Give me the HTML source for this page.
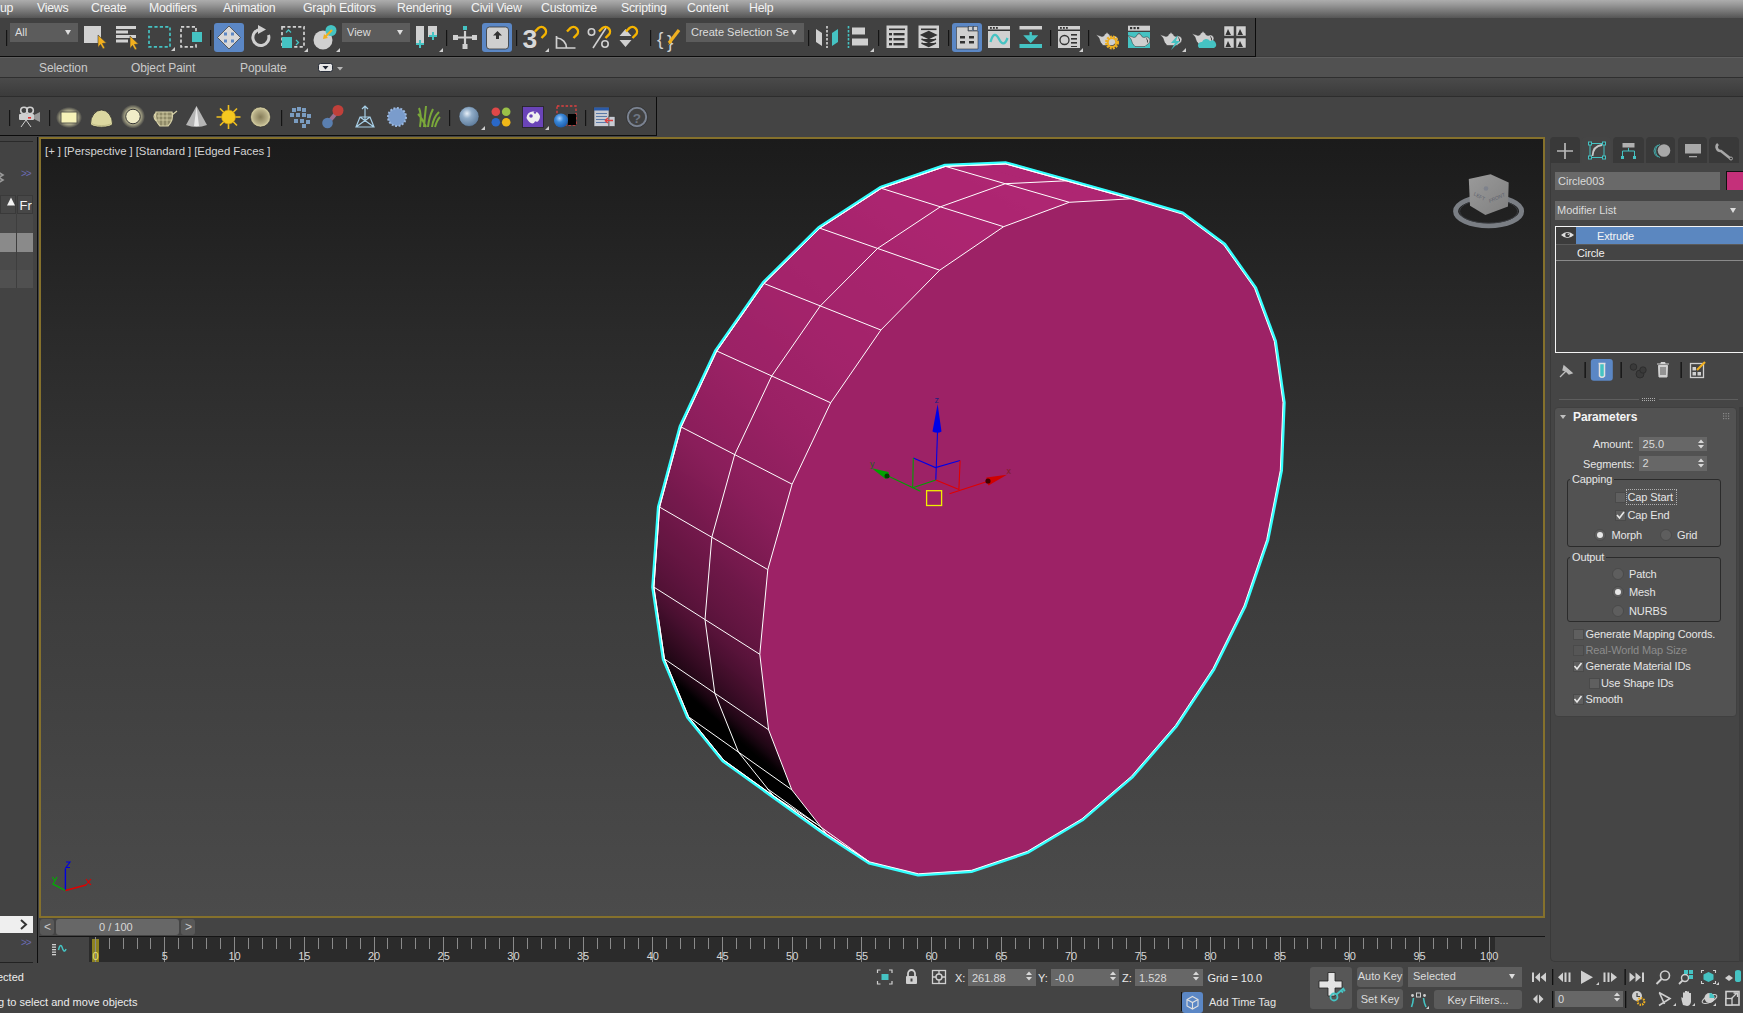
<!DOCTYPE html>
<html><head><meta charset="utf-8">
<style>
*{margin:0;padding:0;box-sizing:border-box}
html,body{width:1743px;height:1013px;overflow:hidden;background:#444;font-family:"Liberation Sans",sans-serif;color:#ddd}
.a{position:absolute}
.t{position:absolute;white-space:nowrap;line-height:1}
#menu{left:0;top:0;width:1743px;height:18px;background:linear-gradient(#adadad,#999 25%,#555)}
#menu span{position:absolute;top:2px;font-size:12.3px;letter-spacing:-0.25px;color:#f4f4f4;white-space:nowrap;line-height:1}
#tb1{left:0;top:18px;width:1256px;height:39px;background:#414141;border-right:1px solid #0c0c0c;border-bottom:1px solid #0c0c0c}
#tbl{left:1256px;top:56px;width:487px;height:1px;background:#3c3c3c}
#rib{left:0;top:57px;width:1743px;height:21px;background:#515151;border-top:1px solid #5f5f5f;border-bottom:1px solid #2f2f2f}
#rib span{position:absolute;top:4px;font-size:12px;letter-spacing:-0.1px;color:#cacaca;line-height:1}
#band{left:0;top:78px;width:1743px;height:19px;background:linear-gradient(#4a4a4a,#3b3b3b);border-bottom:1px solid #2d2d2d}
#tb2{left:0;top:97px;width:657px;height:39px;background:#414141;border-right:1px solid #0c0c0c;border-bottom:1px solid #0c0c0c}
#vp{left:39px;top:137px;width:1506px;height:781px;border:2px solid #85712c;background:linear-gradient(#1b1b1b,#2a2a2a 25%,#3d3d3d 60%,#4b4b4b);overflow:hidden}
#lp{left:0;top:137px;width:34px;height:826px;background:#434343;border-right:1px solid #2a2a2a;border-bottom:1px solid #222}
.dd{position:absolute;background:#5c5c5c;height:19px;font-size:11px;color:#dcdcdc;padding:4px 0 0 5px;line-height:1;white-space:nowrap;overflow:hidden}
.dd:after{content:"";position:absolute;right:7px;top:7px;border-left:3.5px solid transparent;border-right:3.5px solid transparent;border-top:5px solid #ddd}
.sep{position:absolute;width:1px;background:#151515}
.fld{position:absolute;background:#676767;font-size:11px;color:#dadada;padding:3px 0 0 4px;line-height:1;white-space:nowrap}
.btn{position:absolute;background:#5a5a5a;border-radius:3px;font-size:11px;color:#dcdcdc;text-align:center;line-height:1;white-space:nowrap}
.lbl{position:absolute;font-size:11px;color:#e6e6e6;line-height:1;white-space:nowrap;padding-top:1px;letter-spacing:-0.12px}
.cb{position:absolute;width:11px;height:11px;background:#5f5f5f;border:1px solid #4a4a4a}
.rd{position:absolute;width:12px;height:12px;border-radius:50%;background:#5e5e5e;border:1px solid #4a4a4a}
.grp{position:absolute;border:1px solid #2b2b2b;border-radius:3px}
</style></head><body>
<!--MENU-->
<div id="menu" class="a">
<span style="left:0px">up</span><span style="left:37px">Views</span><span style="left:91px">Create</span><span style="left:149px">Modifiers</span><span style="left:223px">Animation</span><span style="left:303px">Graph Editors</span><span style="left:397px">Rendering</span><span style="left:471px">Civil View</span><span style="left:541px">Customize</span><span style="left:621px">Scripting</span><span style="left:687px">Content</span><span style="left:749px">Help</span>
</div>
<div id="tb1" class="a"></div>
<div id="tbl" class="a"></div>
<div id="rib" class="a"><span style="left:39px">Selection</span><span style="left:131px">Object Paint</span><span style="left:240px">Populate</span></div>
<div id="band" class="a"></div>
<div id="tb2" class="a"></div>
<div id="lp" class="a"></div>
<div id="vp" class="a">
<div class="t" style="left:4px;top:7px;font-size:11.4px;color:#d4d4d4;word-spacing:-0.2px">[+ ] [Perspective ] [Standard ] [Edged Faces ]</div>
</div>
<svg class="a" style="left:0;top:0" width="1743" height="1013" viewBox="0 0 1743 1013">
<polygon points="1005.9,164.0 945.5,166.4 881.4,188.3 819.9,228.2 764.0,283.5 716.8,351.0 681.2,427.0 659.6,507.1 653.9,587.1 664.5,659.0 688.7,716.9 723.7,760.1 826.3,833.8 869.3,861.8 918.4,873.8 971.6,870.3 1027.5,851.3 1082.0,818.8 1131.4,776.3 1175.3,725.6 1213.0,668.4 1243.9,606.0 1266.7,539.6 1280.3,470.3 1283.0,402.6 1274.3,341.4 1254.5,288.2 1223.7,244.9 1182.3,214.1 1130.6,198.8" fill="#000" stroke="#33ffff" stroke-width="5.4" stroke-linejoin="round"/>
<defs><linearGradient id="g0" gradientUnits="userSpaceOnUse" x1="1024.4" y1="164.6" x2="1017.8" y2="181.5"><stop offset="0.00" stop-color="#ae2672"/><stop offset="0.20" stop-color="#ae2672"/><stop offset="0.40" stop-color="#ae2672"/><stop offset="0.60" stop-color="#ae2672"/><stop offset="0.80" stop-color="#ae2672"/><stop offset="1.00" stop-color="#ae2672"/></linearGradient><linearGradient id="g1" gradientUnits="userSpaceOnUse" x1="1086.6" y1="182.0" x2="1080.0" y2="199.2"><stop offset="0.00" stop-color="#ae2672"/><stop offset="0.20" stop-color="#ae2672"/><stop offset="0.40" stop-color="#ae2672"/><stop offset="0.60" stop-color="#ae2672"/><stop offset="0.80" stop-color="#ae2672"/><stop offset="1.00" stop-color="#ae2672"/></linearGradient><linearGradient id="g2" gradientUnits="userSpaceOnUse" x1="994.3" y1="165.5" x2="987.2" y2="183.2"><stop offset="0.00" stop-color="#ae2672"/><stop offset="0.20" stop-color="#ae2672"/><stop offset="0.40" stop-color="#ae2672"/><stop offset="0.60" stop-color="#ae2672"/><stop offset="0.80" stop-color="#ae2672"/><stop offset="1.00" stop-color="#ae2672"/></linearGradient><linearGradient id="g3" gradientUnits="userSpaceOnUse" x1="1056.3" y1="183.2" x2="1049.2" y2="201.2"><stop offset="0.00" stop-color="#ae2672"/><stop offset="0.20" stop-color="#ae2672"/><stop offset="0.40" stop-color="#ae2672"/><stop offset="0.60" stop-color="#ae2672"/><stop offset="0.80" stop-color="#ae2672"/><stop offset="1.00" stop-color="#ae2672"/></linearGradient><linearGradient id="g4" gradientUnits="userSpaceOnUse" x1="968.2" y1="164.2" x2="950.7" y2="197.1"><stop offset="0.00" stop-color="#ae2672"/><stop offset="0.20" stop-color="#ae2672"/><stop offset="0.40" stop-color="#ad2571"/><stop offset="0.60" stop-color="#ad2571"/><stop offset="0.80" stop-color="#ad2571"/><stop offset="1.00" stop-color="#ad2571"/></linearGradient><linearGradient id="g5" gradientUnits="userSpaceOnUse" x1="1029.9" y1="182.1" x2="1012.4" y2="215.7"><stop offset="0.00" stop-color="#ae2672"/><stop offset="0.20" stop-color="#ae2672"/><stop offset="0.40" stop-color="#ae2672"/><stop offset="0.60" stop-color="#ae2672"/><stop offset="0.80" stop-color="#ad2571"/><stop offset="1.00" stop-color="#ad2571"/></linearGradient><linearGradient id="g6" gradientUnits="userSpaceOnUse" x1="936.6" y1="175.0" x2="917.7" y2="208.8"><stop offset="0.00" stop-color="#ad2571"/><stop offset="0.20" stop-color="#ad2571"/><stop offset="0.40" stop-color="#ad2571"/><stop offset="0.60" stop-color="#ac2571"/><stop offset="0.80" stop-color="#ac2571"/><stop offset="1.00" stop-color="#ac2570"/></linearGradient><linearGradient id="g7" gradientUnits="userSpaceOnUse" x1="997.9" y1="193.4" x2="979.0" y2="228.1"><stop offset="0.00" stop-color="#ae2672"/><stop offset="0.20" stop-color="#ad2571"/><stop offset="0.40" stop-color="#ad2571"/><stop offset="0.60" stop-color="#ad2571"/><stop offset="0.80" stop-color="#ac2571"/><stop offset="1.00" stop-color="#ac2571"/></linearGradient><linearGradient id="g8" gradientUnits="userSpaceOnUse" x1="909.7" y1="186.5" x2="881.3" y2="228.8"><stop offset="0.00" stop-color="#ac2571"/><stop offset="0.20" stop-color="#ac2570"/><stop offset="0.40" stop-color="#ab2570"/><stop offset="0.60" stop-color="#ab2570"/><stop offset="0.80" stop-color="#aa256f"/><stop offset="1.00" stop-color="#a9256f"/></linearGradient><linearGradient id="g9" gradientUnits="userSpaceOnUse" x1="970.6" y1="205.5" x2="942.0" y2="249.2"><stop offset="0.00" stop-color="#ad2571"/><stop offset="0.20" stop-color="#ac2571"/><stop offset="0.40" stop-color="#ac2571"/><stop offset="0.60" stop-color="#ac2570"/><stop offset="0.80" stop-color="#ab2570"/><stop offset="1.00" stop-color="#aa2570"/></linearGradient><linearGradient id="g10" gradientUnits="userSpaceOnUse" x1="879.5" y1="206.7" x2="849.3" y2="249.4"><stop offset="0.00" stop-color="#aa2570"/><stop offset="0.20" stop-color="#aa256f"/><stop offset="0.40" stop-color="#a9246e"/><stop offset="0.60" stop-color="#a8246e"/><stop offset="0.80" stop-color="#a7246d"/><stop offset="1.00" stop-color="#a7246d"/></linearGradient><linearGradient id="g11" gradientUnits="userSpaceOnUse" x1="939.8" y1="226.5" x2="909.4" y2="270.7"><stop offset="0.00" stop-color="#ac2570"/><stop offset="0.20" stop-color="#ab2570"/><stop offset="0.40" stop-color="#aa256f"/><stop offset="0.60" stop-color="#a9256f"/><stop offset="0.80" stop-color="#a9246e"/><stop offset="1.00" stop-color="#a8246e"/></linearGradient><linearGradient id="g12" gradientUnits="userSpaceOnUse" x1="853.2" y1="229.2" x2="816.1" y2="275.4"><stop offset="0.00" stop-color="#a8246e"/><stop offset="0.20" stop-color="#a7246d"/><stop offset="0.40" stop-color="#a6246d"/><stop offset="0.60" stop-color="#a6246c"/><stop offset="0.80" stop-color="#a5246c"/><stop offset="1.00" stop-color="#a5246c"/></linearGradient><linearGradient id="g13" gradientUnits="userSpaceOnUse" x1="913.0" y1="249.8" x2="875.4" y2="298.0"><stop offset="0.00" stop-color="#a9256f"/><stop offset="0.20" stop-color="#a8246e"/><stop offset="0.40" stop-color="#a8246e"/><stop offset="0.60" stop-color="#a7246d"/><stop offset="0.80" stop-color="#a6246d"/><stop offset="1.00" stop-color="#a6246c"/></linearGradient><linearGradient id="g14" gradientUnits="userSpaceOnUse" x1="825.8" y1="257.7" x2="787.0" y2="303.4"><stop offset="0.00" stop-color="#a6246c"/><stop offset="0.20" stop-color="#a5246c"/><stop offset="0.40" stop-color="#a5246c"/><stop offset="0.60" stop-color="#a4236b"/><stop offset="0.80" stop-color="#a4236b"/><stop offset="1.00" stop-color="#a3236b"/></linearGradient><linearGradient id="g15" gradientUnits="userSpaceOnUse" x1="884.9" y1="279.3" x2="845.5" y2="327.1"><stop offset="0.00" stop-color="#a7246d"/><stop offset="0.20" stop-color="#a6246d"/><stop offset="0.40" stop-color="#a5246c"/><stop offset="0.60" stop-color="#a5246c"/><stop offset="0.80" stop-color="#a4246c"/><stop offset="1.00" stop-color="#a4236b"/></linearGradient><linearGradient id="g16" gradientUnits="userSpaceOnUse" x1="801.2" y1="288.9" x2="759.2" y2="334.9"><stop offset="0.00" stop-color="#a4236b"/><stop offset="0.20" stop-color="#a3236b"/><stop offset="0.40" stop-color="#a3236a"/><stop offset="0.60" stop-color="#a1236a"/><stop offset="0.80" stop-color="#a02369"/><stop offset="1.00" stop-color="#9f2268"/></linearGradient><linearGradient id="g17" gradientUnits="userSpaceOnUse" x1="859.7" y1="311.7" x2="816.8" y2="359.9"><stop offset="0.00" stop-color="#a5246c"/><stop offset="0.20" stop-color="#a4236b"/><stop offset="0.40" stop-color="#a4236b"/><stop offset="0.60" stop-color="#a3236b"/><stop offset="0.80" stop-color="#a2236a"/><stop offset="1.00" stop-color="#a12369"/></linearGradient><linearGradient id="g18" gradientUnits="userSpaceOnUse" x1="777.8" y1="323.8" x2="734.7" y2="368.7"><stop offset="0.00" stop-color="#a12369"/><stop offset="0.20" stop-color="#a02268"/><stop offset="0.40" stop-color="#9e2268"/><stop offset="0.60" stop-color="#9d2267"/><stop offset="0.80" stop-color="#9c2266"/><stop offset="1.00" stop-color="#9a2165"/></linearGradient><linearGradient id="g19" gradientUnits="userSpaceOnUse" x1="835.6" y1="348.0" x2="791.5" y2="395.1"><stop offset="0.00" stop-color="#a3236b"/><stop offset="0.20" stop-color="#a2236a"/><stop offset="0.40" stop-color="#a02369"/><stop offset="0.60" stop-color="#9f2268"/><stop offset="0.80" stop-color="#9e2267"/><stop offset="1.00" stop-color="#9d2266"/></linearGradient><linearGradient id="g20" gradientUnits="userSpaceOnUse" x1="756.4" y1="361.4" x2="713.9" y2="404.3"><stop offset="0.00" stop-color="#9d2266"/><stop offset="0.20" stop-color="#9b2266"/><stop offset="0.40" stop-color="#9a2164"/><stop offset="0.60" stop-color="#972163"/><stop offset="0.80" stop-color="#952061"/><stop offset="1.00" stop-color="#932060"/></linearGradient><linearGradient id="g21" gradientUnits="userSpaceOnUse" x1="813.6" y1="386.8" x2="769.8" y2="432.0"><stop offset="0.00" stop-color="#9f2268"/><stop offset="0.20" stop-color="#9d2267"/><stop offset="0.40" stop-color="#9c2266"/><stop offset="0.60" stop-color="#9b2165"/><stop offset="0.80" stop-color="#992164"/><stop offset="1.00" stop-color="#962062"/></linearGradient><linearGradient id="g22" gradientUnits="userSpaceOnUse" x1="738.5" y1="400.7" x2="695.5" y2="442.3"><stop offset="0.00" stop-color="#962062"/><stop offset="0.20" stop-color="#942061"/><stop offset="0.40" stop-color="#921f5f"/><stop offset="0.60" stop-color="#8f1f5e"/><stop offset="0.80" stop-color="#8d1e5c"/><stop offset="1.00" stop-color="#8b1e5b"/></linearGradient><linearGradient id="g23" gradientUnits="userSpaceOnUse" x1="795.0" y1="427.5" x2="750.7" y2="471.3"><stop offset="0.00" stop-color="#9a2165"/><stop offset="0.20" stop-color="#982163"/><stop offset="0.40" stop-color="#962062"/><stop offset="0.60" stop-color="#932060"/><stop offset="0.80" stop-color="#911f5f"/><stop offset="1.00" stop-color="#8f1f5d"/></linearGradient><linearGradient id="g24" gradientUnits="userSpaceOnUse" x1="722.0" y1="442.1" x2="682.7" y2="480.4"><stop offset="0.00" stop-color="#8f1f5d"/><stop offset="0.20" stop-color="#8c1e5c"/><stop offset="0.40" stop-color="#891e5a"/><stop offset="0.60" stop-color="#851d57"/><stop offset="0.80" stop-color="#811c54"/><stop offset="1.00" stop-color="#7c1b51"/></linearGradient><linearGradient id="g25" gradientUnits="userSpaceOnUse" x1="777.8" y1="470.3" x2="737.1" y2="510.7"><stop offset="0.00" stop-color="#932060"/><stop offset="0.20" stop-color="#901f5e"/><stop offset="0.40" stop-color="#8e1f5d"/><stop offset="0.60" stop-color="#8b1e5b"/><stop offset="0.80" stop-color="#881d59"/><stop offset="1.00" stop-color="#831c56"/></linearGradient><linearGradient id="g26" gradientUnits="userSpaceOnUse" x1="710.8" y1="483.5" x2="671.7" y2="520.4"><stop offset="0.00" stop-color="#831c56"/><stop offset="0.20" stop-color="#7f1b53"/><stop offset="0.40" stop-color="#7b1a50"/><stop offset="0.60" stop-color="#76194d"/><stop offset="0.80" stop-color="#72194b"/><stop offset="1.00" stop-color="#6e1848"/></linearGradient><linearGradient id="g27" gradientUnits="userSpaceOnUse" x1="765.9" y1="513.1" x2="725.4" y2="552.0"><stop offset="0.00" stop-color="#8b1e5b"/><stop offset="0.20" stop-color="#861d58"/><stop offset="0.40" stop-color="#821c55"/><stop offset="0.60" stop-color="#7e1b52"/><stop offset="0.80" stop-color="#791a4f"/><stop offset="1.00" stop-color="#75194c"/></linearGradient><linearGradient id="g28" gradientUnits="userSpaceOnUse" x1="700.7" y1="526.4" x2="667.6" y2="558.9"><stop offset="0.00" stop-color="#75194c"/><stop offset="0.20" stop-color="#71184a"/><stop offset="0.40" stop-color="#6d1747"/><stop offset="0.60" stop-color="#691644"/><stop offset="0.80" stop-color="#651642"/><stop offset="1.00" stop-color="#61153f"/></linearGradient><linearGradient id="g29" gradientUnits="userSpaceOnUse" x1="755.1" y1="557.4" x2="720.7" y2="591.6"><stop offset="0.00" stop-color="#7c1b51"/><stop offset="0.20" stop-color="#781a4e"/><stop offset="0.40" stop-color="#74194c"/><stop offset="0.60" stop-color="#6f1849"/><stop offset="0.80" stop-color="#6b1746"/><stop offset="1.00" stop-color="#671644"/></linearGradient><linearGradient id="g30" gradientUnits="userSpaceOnUse" x1="697.3" y1="567.6" x2="664.7" y2="598.8"><stop offset="0.00" stop-color="#671644"/><stop offset="0.20" stop-color="#641541"/><stop offset="0.40" stop-color="#5f143e"/><stop offset="0.60" stop-color="#5a133b"/><stop offset="0.80" stop-color="#551237"/><stop offset="1.00" stop-color="#501134"/></linearGradient><linearGradient id="g31" gradientUnits="userSpaceOnUse" x1="751.2" y1="599.8" x2="717.3" y2="632.7"><stop offset="0.00" stop-color="#6e1848"/><stop offset="0.20" stop-color="#6a1745"/><stop offset="0.40" stop-color="#661643"/><stop offset="0.60" stop-color="#621540"/><stop offset="0.80" stop-color="#5d143d"/><stop offset="1.00" stop-color="#58133a"/></linearGradient><linearGradient id="g32" gradientUnits="userSpaceOnUse" x1="694.0" y1="609.3" x2="670.1" y2="634.2"><stop offset="0.00" stop-color="#58133a"/><stop offset="0.20" stop-color="#531236"/><stop offset="0.40" stop-color="#4d1032"/><stop offset="0.60" stop-color="#460f2e"/><stop offset="0.80" stop-color="#3e0d29"/><stop offset="1.00" stop-color="#370c24"/></linearGradient><linearGradient id="g33" gradientUnits="userSpaceOnUse" x1="747.2" y1="642.7" x2="722.3" y2="668.9"><stop offset="0.00" stop-color="#61153f"/><stop offset="0.20" stop-color="#5c143c"/><stop offset="0.40" stop-color="#571339"/><stop offset="0.60" stop-color="#511135"/><stop offset="0.80" stop-color="#4b1031"/><stop offset="1.00" stop-color="#430e2c"/></linearGradient><linearGradient id="g34" gradientUnits="userSpaceOnUse" x1="698.8" y1="646.2" x2="675.4" y2="670.0"><stop offset="0.00" stop-color="#430e2c"/><stop offset="0.20" stop-color="#3c0d27"/><stop offset="0.40" stop-color="#350b22"/><stop offset="0.60" stop-color="#2d091d"/><stop offset="0.80" stop-color="#250818"/><stop offset="1.00" stop-color="#1d0613"/></linearGradient><linearGradient id="g35" gradientUnits="userSpaceOnUse" x1="751.5" y1="680.5" x2="727.3" y2="705.6"><stop offset="0.00" stop-color="#501134"/><stop offset="0.20" stop-color="#480f2f"/><stop offset="0.40" stop-color="#410e2a"/><stop offset="0.60" stop-color="#3a0c26"/><stop offset="0.80" stop-color="#320b21"/><stop offset="1.00" stop-color="#2a091b"/></linearGradient><linearGradient id="g36" gradientUnits="userSpaceOnUse" x1="702.7" y1="682.9" x2="688.6" y2="698.9"><stop offset="0.00" stop-color="#2a091b"/><stop offset="0.20" stop-color="#220716"/><stop offset="0.40" stop-color="#190510"/><stop offset="0.60" stop-color="#0e0309"/><stop offset="0.80" stop-color="#030002"/><stop offset="1.00" stop-color="#000000"/></linearGradient><linearGradient id="g37" gradientUnits="userSpaceOnUse" x1="755.0" y1="718.1" x2="740.3" y2="735.0"><stop offset="0.00" stop-color="#370c24"/><stop offset="0.20" stop-color="#2f0a1f"/><stop offset="0.40" stop-color="#28081a"/><stop offset="0.60" stop-color="#200715"/><stop offset="0.80" stop-color="#16040e"/><stop offset="1.00" stop-color="#0b0207"/></linearGradient><linearGradient id="g38" gradientUnits="userSpaceOnUse" x1="714.5" y1="712.4" x2="700.9" y2="727.8"><stop offset="0.00" stop-color="#0b0207"/><stop offset="0.20" stop-color="#000000"/><stop offset="0.40" stop-color="#000000"/><stop offset="0.60" stop-color="#000000"/><stop offset="0.80" stop-color="#000000"/><stop offset="1.00" stop-color="#000000"/></linearGradient><linearGradient id="g39" gradientUnits="userSpaceOnUse" x1="766.5" y1="748.2" x2="752.3" y2="764.4"><stop offset="0.00" stop-color="#1d0613"/><stop offset="0.20" stop-color="#12040c"/><stop offset="0.40" stop-color="#070104"/><stop offset="0.60" stop-color="#000000"/><stop offset="0.80" stop-color="#000000"/><stop offset="1.00" stop-color="#000000"/></linearGradient><linearGradient id="g40" gradientUnits="userSpaceOnUse" x1="725.4" y1="741.8" x2="719.5" y2="749.2"><stop offset="0.00" stop-color="#000000"/><stop offset="0.20" stop-color="#000000"/><stop offset="0.40" stop-color="#000000"/><stop offset="0.60" stop-color="#000000"/><stop offset="0.80" stop-color="#000000"/><stop offset="1.00" stop-color="#000000"/></linearGradient><linearGradient id="g41" gradientUnits="userSpaceOnUse" x1="777.0" y1="778.2" x2="770.9" y2="786.0"><stop offset="0.00" stop-color="#000000"/><stop offset="0.20" stop-color="#000000"/><stop offset="0.40" stop-color="#000000"/><stop offset="0.60" stop-color="#000000"/><stop offset="0.80" stop-color="#000000"/><stop offset="1.00" stop-color="#000000"/></linearGradient><linearGradient id="g42" gradientUnits="userSpaceOnUse" x1="742.7" y1="763.7" x2="737.1" y2="770.8"><stop offset="0.00" stop-color="#000000"/><stop offset="0.20" stop-color="#000000"/><stop offset="0.40" stop-color="#000000"/><stop offset="0.60" stop-color="#000000"/><stop offset="0.80" stop-color="#000000"/><stop offset="1.00" stop-color="#000000"/></linearGradient><linearGradient id="g43" gradientUnits="userSpaceOnUse" x1="794.2" y1="800.3" x2="788.3" y2="807.7"><stop offset="0.00" stop-color="#000000"/><stop offset="0.20" stop-color="#000000"/><stop offset="0.40" stop-color="#000000"/><stop offset="0.60" stop-color="#000000"/><stop offset="0.80" stop-color="#000000"/><stop offset="1.00" stop-color="#000000"/></linearGradient><linearGradient id="g44" gradientUnits="userSpaceOnUse" x1="759.0" y1="785.6" x2="759.9" y2="784.5"><stop offset="0.00" stop-color="#000000"/><stop offset="0.20" stop-color="#000000"/><stop offset="0.40" stop-color="#000000"/><stop offset="0.60" stop-color="#000000"/><stop offset="0.80" stop-color="#000000"/><stop offset="1.00" stop-color="#000000"/></linearGradient><linearGradient id="g45" gradientUnits="userSpaceOnUse" x1="810.3" y1="822.5" x2="811.2" y2="821.3"><stop offset="0.00" stop-color="#000000"/><stop offset="0.20" stop-color="#000000"/><stop offset="0.40" stop-color="#000000"/><stop offset="0.60" stop-color="#000000"/><stop offset="0.80" stop-color="#000000"/><stop offset="1.00" stop-color="#000000"/></linearGradient><linearGradient id="g46" gradientUnits="userSpaceOnUse" x1="780.6" y1="799.7" x2="781.4" y2="798.5"><stop offset="0.00" stop-color="#000000"/><stop offset="0.20" stop-color="#000000"/><stop offset="0.40" stop-color="#000000"/><stop offset="0.60" stop-color="#000000"/><stop offset="0.80" stop-color="#000000"/><stop offset="1.00" stop-color="#000000"/></linearGradient><linearGradient id="g47" gradientUnits="userSpaceOnUse" x1="831.8" y1="836.5" x2="832.7" y2="835.3"><stop offset="0.00" stop-color="#000000"/><stop offset="0.20" stop-color="#000000"/><stop offset="0.40" stop-color="#000000"/><stop offset="0.60" stop-color="#000000"/><stop offset="0.80" stop-color="#000000"/><stop offset="1.00" stop-color="#000000"/></linearGradient></defs>
<clipPath id="hc"><polygon points="1005.9,164.0 945.5,166.4 881.4,188.3 819.9,228.2 764.0,283.5 716.8,351.0 681.2,427.0 659.6,507.1 653.9,587.1 664.5,659.0 688.7,716.9 723.7,760.1 826.3,833.8 869.3,861.8 918.4,873.8 971.6,870.3 1027.5,851.3 1082.0,818.8 1131.4,776.3 1175.3,725.6 1213.0,668.4 1243.9,606.0 1266.7,539.6 1280.3,470.3 1283.0,402.6 1274.3,341.4 1254.5,288.2 1223.7,244.9 1182.3,214.1 1130.6,198.8"/></clipPath>
<g clip-path="url(#hc)"><polygon points="1004.6,163.6 972.5,164.6 1037.4,183.0 1069.7,181.8" fill="url(#g0)"/><polygon points="1064.7,180.4 1032.4,181.6 1101.8,201.4 1134.3,199.8" fill="url(#g1)"/><polygon points="975.0,164.5 941.9,166.1 1006.5,184.9 1039.8,182.9" fill="url(#g2)"/><polygon points="1034.9,181.5 1001.5,183.5 1070.7,203.6 1104.3,201.2" fill="url(#g3)"/><polygon points="944.4,165.7 910.2,177.0 974.4,196.4 1009.0,184.4" fill="url(#g4)"/><polygon points="1004.1,183.0 969.4,194.9 1038.2,215.7 1073.2,203.0" fill="url(#g5)"/><polygon points="912.8,176.1 877.9,188.4 941.6,208.4 976.9,195.4" fill="url(#g6)"/><polygon points="972.0,194.0 936.7,206.9 1004.9,228.4 1040.8,214.7" fill="url(#g7)"/><polygon points="880.4,187.2 847.4,208.1 910.4,229.1 944.1,207.1" fill="url(#g8)"/><polygon points="939.2,205.6 905.6,227.5 973.2,250.0 1007.5,227.0" fill="url(#g9)"/><polygon points="849.8,206.6 816.5,228.5 878.9,250.4 912.9,227.4" fill="url(#g10)"/><polygon points="908.1,225.8 874.1,248.7 941.1,272.3 975.8,248.2" fill="url(#g11)"/><polygon points="818.9,226.6 788.7,256.0 850.4,279.1 881.3,248.4" fill="url(#g12)"/><polygon points="876.5,246.8 845.6,277.3 911.8,302.1 943.5,270.2" fill="url(#g13)"/><polygon points="791.0,253.8 760.8,284.0 821.7,308.3 852.7,276.8" fill="url(#g14)"/><polygon points="847.9,275.0 817.0,306.4 882.4,332.5 914.2,299.7" fill="url(#g15)"/><polygon points="762.9,281.5 737.3,317.6 797.4,343.3 823.8,305.7" fill="url(#g16)"/><polygon points="819.2,303.9 792.8,341.3 857.3,368.9 884.6,329.8" fill="url(#g17)"/><polygon points="739.2,314.9 714.0,351.6 773.2,378.6 799.3,340.5" fill="url(#g18)"/><polygon points="794.7,338.5 768.7,376.5 832.4,405.6 859.3,366.0" fill="url(#g19)"/><polygon points="715.6,348.7 696.2,389.6 754.7,418.0 774.9,375.6" fill="url(#g20)"/><polygon points="770.4,373.6 750.2,415.8 813.0,446.4 834.2,402.5" fill="url(#g21)"/><polygon points="697.6,386.5 678.7,427.5 736.4,457.4 756.1,414.9" fill="url(#g22)"/><polygon points="751.6,412.7 732.0,455.1 794.0,487.2 814.6,443.1" fill="url(#g23)"/><polygon points="679.9,424.4 667.9,467.7 724.9,499.0 737.6,454.1" fill="url(#g24)"/><polygon points="733.2,451.9 720.5,496.6 781.8,530.2 795.3,483.8" fill="url(#g25)"/><polygon points="668.8,464.5 657.5,507.6 713.8,540.2 725.8,495.7" fill="url(#g26)"/><polygon points="721.5,493.3 709.5,537.7 770.0,572.7 782.7,526.7" fill="url(#g27)"/><polygon points="658.1,504.3 654.7,547.8 710.4,581.7 714.4,536.9" fill="url(#g28)"/><polygon points="710.1,534.4 706.1,579.1 765.9,615.5 770.6,569.3" fill="url(#g29)"/><polygon points="654.9,544.6 652.2,587.3 707.3,622.4 710.7,578.4" fill="url(#g30)"/><polygon points="706.4,575.8 703.1,619.7 762.2,657.3 766.2,612.1" fill="url(#g31)"/><polygon points="652.1,584.3 657.5,623.6 712.2,659.6 707.3,619.3" fill="url(#g32)"/><polygon points="703.0,616.6 708.0,656.9 766.7,695.5 762.2,654.1" fill="url(#g33)"/><polygon points="657.1,620.7 663.0,658.9 717.3,695.8 711.9,656.7" fill="url(#g34)"/><polygon points="707.7,653.9 713.2,693.0 771.3,732.5 766.3,692.5" fill="url(#g35)"/><polygon points="662.3,656.3 675.3,688.1 729.4,725.7 716.7,693.2" fill="url(#g36)"/><polygon points="712.5,690.3 725.2,722.8 783.1,762.9 770.7,729.8" fill="url(#g37)"/><polygon points="674.3,685.8 687.5,716.4 741.3,754.5 728.4,723.3" fill="url(#g38)"/><polygon points="724.3,720.4 737.2,751.6 794.7,792.3 782.1,760.5" fill="url(#g39)"/><polygon points="686.3,714.4 705.2,738.3 758.9,776.6 740.1,752.5" fill="url(#g40)"/><polygon points="736.0,749.6 754.8,773.7 812.2,814.6 793.6,790.2" fill="url(#g41)"/><polygon points="703.8,736.5 722.7,759.3 776.3,797.8 757.5,774.9" fill="url(#g42)"/><polygon points="753.4,771.9 772.2,794.9 829.4,836.0 810.8,812.8" fill="url(#g43)"/><polygon points="721.1,757.8 744.5,773.5 798.1,812.0 774.7,796.4" fill="url(#g44)"/><polygon points="770.6,793.4 794.0,809.1 851.2,850.1 827.8,834.6" fill="url(#g45)"/><polygon points="742.8,772.4 765.9,787.1 819.5,825.6 796.4,810.9" fill="url(#g46)"/><polygon points="792.3,808.0 815.4,822.6 872.5,863.6 849.4,849.0" fill="url(#g47)"/></g>
<polygon points="1130.6,198.8 1069.3,202.3 1003.6,226.7 939.7,270.2 880.9,330.0 830.7,402.8 792.1,484.2 767.8,569.6 759.8,654.3 768.6,729.8 791.8,789.8 826.3,833.8 869.3,861.8 918.4,873.8 971.6,870.3 1027.5,851.3 1082.0,818.8 1131.4,776.3 1175.3,725.6 1213.0,668.4 1243.9,606.0 1266.7,539.6 1280.3,470.3 1283.0,402.6 1274.3,341.4 1254.5,288.2 1223.7,244.9 1182.3,214.1" fill="#9d2266"/>
<path d="M1005.9,164.0 L945.5,166.4 L881.4,188.3 L819.9,228.2 L764.0,283.5 L716.8,351.0 L681.2,427.0 L659.6,507.1 L653.9,587.1 L664.5,659.0 L688.7,716.9 L723.7,760.1 M1066.2,180.8 L1005.3,183.7 L940.4,206.8 L877.6,248.4 L820.3,305.9 L771.7,376.0 L734.7,454.6 L711.8,537.3 L705.0,619.5 L714.8,693.2 L738.5,752.2 L773.3,795.8 L816.4,823.9 M1130.6,198.8 L1069.3,202.3 L1003.6,226.7 L939.7,270.2 L880.9,330.0 L830.7,402.8 L792.1,484.2 L767.8,569.6 L759.8,654.3 L768.6,729.8 L791.8,789.8 L826.3,833.8 L869.3,861.8 M1005.9,164.0 L1130.6,198.8 M945.5,166.4 L1069.3,202.3 M881.4,188.3 L1003.6,226.7 M819.9,228.2 L939.7,270.2 M764.0,283.5 L880.9,330.0 M716.8,351.0 L830.7,402.8 M681.2,427.0 L792.1,484.2 M659.6,507.1 L767.8,569.6 M653.9,587.1 L759.8,654.3 M664.5,659.0 L768.6,729.8 M688.7,716.9 L791.8,789.8 M723.7,760.1 L826.3,833.8 M766.8,788.3 L869.3,861.8" fill="none" stroke="#fff" stroke-width="1"/>
<polygon points="1005.9,164.0 945.5,166.4 881.4,188.3 819.9,228.2 764.0,283.5 716.8,351.0 681.2,427.0 659.6,507.1 653.9,587.1 664.5,659.0 688.7,716.9 723.7,760.1 826.3,833.8 869.3,861.8 918.4,873.8 971.6,870.3 1027.5,851.3 1082.0,818.8 1131.4,776.3 1175.3,725.6 1213.0,668.4 1243.9,606.0 1266.7,539.6 1280.3,470.3 1283.0,402.6 1274.3,341.4 1254.5,288.2 1223.7,244.9 1182.3,214.1 1130.6,198.8" fill="none" stroke="#fff" stroke-width="1"/><!-- gizmo -->
<g stroke-width="1.1" fill="none">
<path d="M935.8,480 L937.6,430" stroke="#0000e8"/>
<path d="M913.3,458.1 L935.5,467.6 L960.1,460.5" stroke="#0000e8"/>
<path d="M913.3,458.1 L912.7,487.7 L935.8,480 M920.4,491.3 L887,475.5" stroke="#00a000"/>
<path d="M960.1,460.5 L958.9,489.5 L935.8,480 M949.5,493.7 L988,481.2" stroke="#e00000"/>
</g>
<path d="M937.6,404 L941.5,431.5 Q937.6,434 932.5,431.5 Z" fill="#0000e8"/>
<path d="M871.8,468.2 L888.5,472 Q889.5,477 885.5,479 Z" fill="#00a000"/><circle cx="887" cy="476" r="2.5" fill="#004000"/>
<path d="M1006.9,474.7 L988.5,485.5 Q985.5,481 986.5,477.5 Z" fill="#d00000"/><circle cx="988" cy="481" r="2.6" fill="#400000"/>
<rect x="926.6" y="490.7" width="15" height="14.8" fill="none" stroke="#f0f000" stroke-width="1.3"/>
<g font-family="Liberation Sans" font-size="9">
<text x="934.5" y="403" fill="#202080">z</text>
<text x="870" y="467" fill="#206020">y</text>
<text x="1006.5" y="474" fill="#802020">x</text>
</g>
<!-- tripod -->
<path d="M65.4,890.5 V868.3" stroke="#0000e0" stroke-width="1.4"/>
<path d="M65.4,890.5 L52.5,883.8" stroke="#00b000" stroke-width="1.3"/>
<path d="M65.4,890.5 L86,885" stroke="#e00000" stroke-width="1.3"/>
<path d="M66,862 H70 L66,867.5 H70" fill="none" stroke="#0000e0" stroke-width="1.1"/>
<path d="M52.5,877 L55,881 M57,877 L53,884" fill="none" stroke="#00b000" stroke-width="1.1"/>
<path d="M86,879 L91,885 M91,879 L86,885" fill="none" stroke="#e00000" stroke-width="1.1"/>
<!-- viewcube -->
<ellipse cx="1488.6" cy="211.3" rx="33" ry="14.5" fill="none" stroke="#7a7e84" stroke-width="5"/>
<ellipse cx="1488.6" cy="211.3" rx="29" ry="11.8" fill="none" stroke="#3a3c40" stroke-width="1"/>
<defs><linearGradient id="vcg" x1="0" y1="0" x2="1" y2="1"><stop offset="0" stop-color="#9a9a9a"/><stop offset="1" stop-color="#808080"/></linearGradient></defs><path d="M1468.8,179 L1490.6,174.2 L1508.7,182.5 L1508,206.6 L1485.4,214.9 L1470,205.8 Z" fill="url(#vcg)"/>

<text x="0" y="0" font-family="Liberation Sans" font-size="5" fill="#5c606c" transform="translate(1489.5,203) rotate(-24) skewX(-10)">FRONT</text><text x="0" y="0" font-family="Liberation Sans" font-size="5" fill="#5c606c" transform="translate(1473.5,195) rotate(30) skewX(10)">LEFT</text><circle cx="1486" cy="188.5" r="2.3" fill="#7e828c"/>

</svg>
<div class="dd" style="left:10px;top:23px;width:68px">All</div>
<div class="dd" style="left:342px;top:23px;width:68px">View</div>
<div class="dd" style="left:686px;top:23px;width:118px">Create Selection Se</div>
<svg class="a" style="left:0;top:0" width="1743" height="140" viewBox="0 0 1743 140">
<defs>
<g id="tri"><path d="M0,4 L4,0 L4,4 Z" fill="#d0d0d0"/></g>
<g id="mag"><path d="M0,5 L3.3,1.7 A4.6,4.6 0 0 1 9.8,8.2 L6.5,11.5" fill="none" stroke="#f5b400" stroke-width="2.4"/></g>
<g id="teapot"><path d="M-11,-5.5 L-5,-3.5 L-3,-4.2 L-2.2,-6 L-0.8,-6.6 V-7.6 H0.8 V-6.6 L2.2,-6 L3,-4.2 L5,-3.5 Q9.5,-5.5 11,-1 Q11,3 7.5,4 L6,5.5 H-4 Q-7,3 -8,-2 Z" fill="#cfcfcf" stroke="#333" stroke-width="0.5"/><path d="M7,-2.5 Q9,-2 8.5,1.5" fill="none" stroke="#444" stroke-width="1"/></g>
</defs>
<!-- separators tb1 -->
<g fill="#141414">
<rect x="6" y="30" width="1.2" height="16"/><rect x="210" y="30" width="1.2" height="16"/><rect x="446" y="30" width="1.2" height="16"/><rect x="516" y="30" width="1.2" height="16"/><rect x="650" y="30" width="1.2" height="16"/><rect x="808" y="30" width="1.2" height="16"/><rect x="878" y="30" width="1.2" height="16"/><rect x="948" y="30" width="1.2" height="16"/><rect x="1050" y="30" width="1.2" height="16"/><rect x="1088" y="30" width="1.2" height="16"/>
</g>
<!-- select object -->
<rect x="84" y="26" width="17" height="17" fill="#d2d2d2"/>
<path d="M98,35 L106.5,43 L102.5,43.5 L105,48 L103,49 L100.5,44.5 L98,47.5 Z" fill="#f2b01e" stroke="#3f3f3f" stroke-width="0.6"/>
<!-- select by name -->
<g fill="#d2d2d2"><rect x="116" y="26" width="20" height="3"/><rect x="116" y="30.5" width="12" height="3"/><rect x="116" y="35" width="20" height="3"/><rect x="116" y="39.5" width="12" height="3"/></g>
<path d="M130,36 L138.5,44 L134.5,44.5 L137,49 L135,50 L132.5,45.5 L130,48.5 Z" fill="#f2b01e" stroke="#3f3f3f" stroke-width="0.6"/>
<!-- rect select -->
<rect x="149" y="26.8" width="21" height="20" fill="none" stroke="#45c3c3" stroke-width="1.7" stroke-dasharray="3.2,2.2"/>
<use href="#tri" x="171" y="47"/>
<!-- window/crossing -->
<rect x="181" y="26.8" width="15" height="20" fill="none" stroke="#d2d2d2" stroke-width="1.7" stroke-dasharray="3.2,2.2"/>
<rect x="192" y="32" width="10" height="10" fill="#45c3c3"/>
<!-- move selected -->
<rect x="214" y="23" width="30" height="29" rx="3" fill="#5b87c5"/>
<path d="M229,26 L240.5,37.5 L229,49 L217.5,37.5 Z" fill="#d8d8d8" stroke="#444" stroke-width="0.8"/>
<g fill="#5b87c5"><rect x="224" y="32.5" width="3" height="3"/><rect x="231" y="32.5" width="3" height="3"/><rect x="224" y="39.5" width="3" height="3"/><rect x="231" y="39.5" width="3" height="3"/></g>
<!-- rotate -->
<path d="M268.5,35 A8,8 0 1 1 260,29.5" fill="none" stroke="#d0d0d0" stroke-width="3"/>
<path d="M258,25 L266,29.5 L258,34 Z" fill="#d0d0d0"/>
<!-- scale -->
<rect x="282" y="26.8" width="22" height="20" fill="none" stroke="#d2d2d2" stroke-width="1.7" stroke-dasharray="3.2,2.2"/>
<rect x="282" y="37" width="10" height="11" fill="#45c3c3"/>
<path d="M286,32.5 L288.5,30 L291,32.5 M296,40 L298.5,42.5 L296,45" fill="none" stroke="#45c3c3" stroke-width="1.3"/>
<use href="#tri" x="304" y="48"/>
<!-- placement -->
<circle cx="323" cy="40" r="9.5" fill="#d0d0d0"/>
<circle cx="331" cy="30.5" r="5.5" fill="#45c3c3"/>
<path d="M332,30 L325,37" stroke="#f0b020" stroke-width="2"/><path d="M323,39 L324,34 L328,38 Z" fill="#f0b020"/>
<use href="#tri" x="336" y="48"/>
<!-- pivot -->
<rect x="416" y="26" width="8" height="19" fill="#d0d0d0"/><rect x="428" y="26" width="9" height="11" fill="#d0d0d0"/>
<path d="M420,40 V48 M416,44 H424 M433,32 V40 M429,36 H437" stroke="#45c3c3" stroke-width="2"/>
<use href="#tri" x="439" y="48"/>
<!-- manipulate -->
<path d="M455,37.5 H475 M465,31 V47" stroke="#d0d0d0" stroke-width="2.2"/>
<g fill="#d0d0d0"><rect x="453" y="35" width="5" height="5"/><rect x="472" y="35" width="5" height="5"/><rect x="462.5" y="44" width="5" height="5"/></g>
<rect x="463" y="26" width="4" height="4" fill="#45c3c3"/>
<!-- keyboard override -->
<rect x="482" y="23" width="30" height="29" rx="3" fill="#5b87c5"/>
<rect x="486.5" y="27" width="22" height="22" rx="3" fill="#cfcfcf" stroke="#333" stroke-width="0.8"/>
<path d="M497.5,31 L502,35.5 L499,35.5 L499,39 L496,39 L496,35.5 L493,35.5 Z" fill="#333"/>
<!-- snaps -->
<text x="522.5" y="48" font-size="26.5" font-weight="bold" fill="#d8d8d8" font-family="Liberation Sans" style="font-weight:bold">3</text>
<use href="#mag" x="535" y="26.5"/>
<use href="#tri" x="545" y="48"/>
<path d="M556.5,36 V48 H575.5" fill="none" stroke="#d0d0d0" stroke-width="1.7"/>
<path d="M557,38 A10,10 0 0 1 566.5,48" fill="none" stroke="#d0d0d0" stroke-width="1.7"/>
<use href="#mag" x="567" y="26.5"/>
<circle cx="591.5" cy="32" r="3.2" fill="none" stroke="#d0d0d0" stroke-width="1.6"/><circle cx="605" cy="44" r="3.2" fill="none" stroke="#d0d0d0" stroke-width="1.6"/>
<path d="M593,48 L606,28" stroke="#d0d0d0" stroke-width="1.6"/>
<use href="#mag" x="599" y="26.5"/>
<path d="M619.5,36 L625.5,29 L631.5,36 Z M619.5,40 L631.5,40 L625.5,47 Z" fill="#d0d0d0"/>
<use href="#mag" x="626" y="26.5"/>
<!-- {} pencil -->
<text x="657" y="45" font-size="19" fill="#cfcfcf" font-family="Liberation Sans">{</text><text x="667" y="48" font-size="19" fill="#cfcfcf" font-family="Liberation Sans">}</text>
<path d="M669,43 L679,30" stroke="#f0b020" stroke-width="3.2"/><path d="M668,45 L670.5,41 L672,42.5 Z" fill="#f0b020"/>
<!-- mirror -->
<path d="M816,29 L822,33 L822,46 L816,42 Z" fill="#d0d0d0"/>
<path d="M827,26 V48" stroke="#e0e0e0" stroke-width="1.5" stroke-dasharray="2.5,1.5"/>
<path d="M838,29 L832,33 L832,46 L838,42 Z" fill="#45c3c3"/>
<!-- align -->
<path d="M848.5,26 V48" stroke="#45c3c3" stroke-width="1.6" stroke-dasharray="2.5,1.5"/>
<rect x="852" y="27.5" width="13" height="7" fill="#d0d0d0"/><rect x="852" y="38.5" width="16" height="7" fill="#d0d0d0"/>
<use href="#tri" x="870" y="48"/>
<!-- scene explorer -->
<rect x="886.5" y="25.5" width="21" height="22.5" fill="#d0d0d0"/>
<g fill="#333"><rect x="889" y="28.5" width="16" height="1.6"/><rect x="889" y="33" width="3" height="2.4"/><rect x="893.5" y="33" width="11" height="2.4"/><rect x="889" y="38" width="3" height="2.4"/><rect x="893.5" y="38" width="11" height="2.4"/><rect x="889" y="43" width="3" height="2.4"/><rect x="893.5" y="43" width="11" height="2.4"/></g>
<!-- layers -->
<rect x="918.5" y="25.5" width="20.5" height="22.5" fill="#d0d0d0"/>
<rect x="921" y="28.5" width="15.5" height="1.6" fill="#333"/>
<path d="M921.5,35 L928.7,31.5 L936,35 L928.7,38.5 Z M921.5,39 L928.7,42.5 L936,39 M921.5,43 L928.7,46.5 L936,43" fill="#333" stroke="#333" stroke-width="1.4"/>
<!-- graphite selected -->
<rect x="952" y="23" width="30" height="29" rx="3" fill="#5b87c5"/>
<path d="M956.5,27 H968 V31 H978 V49 H956.5 Z" fill="#d0d0d0" stroke="#333" stroke-width="0.6"/>
<rect x="968.5" y="26.5" width="4" height="4" fill="#d0d0d0" stroke="#333" stroke-width="0.5"/><rect x="973.5" y="26.5" width="4" height="4" fill="#d0d0d0" stroke="#333" stroke-width="0.5"/>
<g fill="#333"><rect x="960" y="36" width="5" height="2.5"/><rect x="969" y="36" width="5" height="2.5"/><rect x="960" y="41" width="5" height="2.5"/><rect x="969" y="41" width="5" height="2.5"/></g>
<!-- curve editor -->
<rect x="988" y="26" width="22" height="22" fill="#d0d0d0"/>
<rect x="988" y="29.5" width="22" height="1.5" fill="#333"/>
<g fill="#333"><rect x="990" y="27" width="1.8" height="1.8"/><rect x="993" y="27" width="1.8" height="1.8"/><rect x="996" y="27" width="1.8" height="1.8"/></g>
<path d="M990.5,42 C993,33 996,33 999,39 C1002,45 1005,45 1007.5,38" fill="none" stroke="#45c3c3" stroke-width="2.3"/>
<!-- dope -->
<rect x="1019.5" y="26" width="22.5" height="3.5" fill="#d0d0d0"/>
<path d="M1030.7,32 V39 M1026,36.5 L1030.7,41.5 L1035.5,36.5 Z" stroke="#45c3c3" stroke-width="2.4" fill="#45c3c3"/>
<rect x="1019.5" y="44" width="22.5" height="4" fill="#45c3c3"/>
<!-- material editor -->
<rect x="1058" y="26" width="22" height="22" fill="#d0d0d0"/>
<rect x="1058" y="29.5" width="22" height="1.5" fill="#333"/>
<g fill="#333"><rect x="1060" y="27" width="1.8" height="1.8"/><rect x="1063" y="27" width="1.8" height="1.8"/><rect x="1066" y="27" width="1.8" height="1.8"/></g>
<circle cx="1064.5" cy="40" r="4.5" fill="none" stroke="#333" stroke-width="1.3"/>
<g fill="#333"><rect x="1071" y="34" width="6" height="1.6"/><rect x="1071" y="38" width="6" height="1.6"/><rect x="1071" y="42" width="6" height="1.6"/><rect x="1071" y="46" width="6" height="1"/></g>
<use href="#tri" x="1079" y="48"/>
<!-- render setup -->
<use href="#teapot" x="1107" y="40"/>
<circle cx="1112" cy="42.5" r="5.3" fill="none" stroke="#f0b020" stroke-width="3.4" stroke-dasharray="1.8,1"/>
<circle cx="1112" cy="42.5" r="4.3" fill="none" stroke="#f0b020" stroke-width="1.8"/>
<!-- frame window -->
<rect x="1128" y="25.7" width="22" height="5" fill="#d0d0d0"/>
<g fill="#333"><rect x="1130" y="27" width="2.2" height="2.2"/><rect x="1133.5" y="27" width="2.2" height="2.2"/><rect x="1137" y="27" width="2.2" height="2.2"/></g>
<rect x="1128" y="32" width="22" height="16" fill="#45c3c3"/>
<use href="#teapot" x="1139" y="41"/>
<!-- render -->
<use href="#teapot" x="1171" y="40"/>
<path d="M1178,35 L1171,43 L1175,43 L1171,50 L1180,41 L1176,41 Z" fill="#45c3c3"/>
<use href="#tri" x="1182" y="48"/>
<!-- cloud -->
<use href="#teapot" x="1203" y="39"/>
<path d="M1199,48 A3.5,3.5 0 0 1 1202,42 A4.5,4.5 0 0 1 1210,41 A3.5,3.5 0 0 1 1214,48 Z" fill="#45c3c3"/>
<!-- viewports -->
<g fill="#d0d0d0" stroke="#333" stroke-width="0.5"><rect x="1224" y="26" width="10" height="10"/><rect x="1236" y="26" width="10" height="10"/><rect x="1224" y="38" width="10" height="10"/><rect x="1236" y="38" width="10" height="10"/></g>
<g fill="#333"><path d="M1225.5,35 L1228,29 L1231,35 Z M1237.5,35 L1240,29 L1243,35 Z M1225.5,47 L1228,41 L1231,47 Z M1237.5,47 L1240,41 L1243,47 Z"/></g>

<!-- ribbon icon -->
<rect x="318.5" y="63.5" width="14" height="8" rx="2" fill="#e6e6e6" stroke="#1e2430" stroke-width="0.9"/>
<path d="M322.5,66 L328.5,66 L325.5,69.5 Z" fill="#1e2430"/>
<path d="M337,67 L343,67 L340,70.5 Z" fill="#b8b8b8"/>

<!-- toolbar 2 -->
<g fill="#141414"><rect x="9" y="110" width="1.2" height="16"/><rect x="49" y="110" width="1.2" height="16"/><rect x="281" y="110" width="1.2" height="16"/><rect x="449" y="110" width="1.2" height="16"/><rect x="585" y="110" width="1.2" height="16"/></g>
<!-- camera -->
<circle cx="24" cy="110.5" r="3.3" fill="none" stroke="#cfcfcf" stroke-width="1.6"/><circle cx="30" cy="110.5" r="3.3" fill="none" stroke="#cfcfcf" stroke-width="1.6"/>
<rect x="19" y="114" width="15" height="6" rx="1" fill="#cfcfcf"/><path d="M34,115 L40,112 L40,122 L34,119 Z" fill="#9a9a9a"/>
<rect x="28" y="117" width="3" height="1.6" fill="#e03030"/>
<path d="M26,120 L21,127 M26,120 L31,127" stroke="#cfcfcf" stroke-width="1"/>
<!-- rect light -->
<defs><radialGradient id="glow"><stop offset="0.55" stop-color="#d8d4a8" stop-opacity="0.9"/><stop offset="1" stop-color="#d8d4a8" stop-opacity="0"/></radialGradient></defs><rect x="56" y="107" width="26" height="21" rx="6" fill="url(#glow)"/>
<rect x="61" y="112" width="16" height="11" fill="#f6f2b8" stroke="#3a3a3a" stroke-width="0.8"/>
<!-- dome -->
<path d="M90.5,124 A11,14 0 0 1 112.5,124 A11,3.2 0 0 1 90.5,124 Z" fill="#dcd8a0" stroke="#2a2a2a" stroke-width="0.8"/><path d="M92,123.5 A10,3 0 0 0 111,123.5" fill="none" stroke="#b8b480" stroke-width="0.8"/>
<!-- sphere glow -->
<circle cx="133" cy="116.5" r="12" fill="url(#glow)"/>
<circle cx="133" cy="116.5" r="7.3" fill="#f0ecc8" stroke="#333" stroke-width="1"/>
<!-- teapot wire -->
<path d="M156,112 L172,112 Q174,120 168,126 L160,126 Q154,120 156,112 Z M172,115 L177,111 M156,113 Q152,116 156,121" fill="#8f8a68" stroke="#d8d2a8" stroke-width="1.2"/>
<path d="M159,113 V125 M163,112 V126 M167,112 V126 M157,116 H172 M157,120 H171" stroke="#d8d2a8" stroke-width="0.8"/>
<!-- cone -->
<path d="M196.5,106 L207,125 Q196.5,129 186,125 Z" fill="#b5b5b5"/><path d="M196.5,106 L199,126 L194,126 Z" fill="#e8e8e8"/>
<!-- sun -->
<g stroke="#f0c020" stroke-width="1.6"><path d="M228.5,105 V129 M216.5,117 H240.5 M220,108.5 L237,125.5 M237,108.5 L220,125.5"/></g>
<circle cx="228.5" cy="117" r="7" fill="#f5c820" stroke="#c09010" stroke-width="0.6"/>
<!-- yellow sphere -->
<defs><radialGradient id="ys"><stop offset="0" stop-color="#857c58"/><stop offset="0.7" stop-color="#b8b088"/><stop offset="1" stop-color="#ddd6a8"/></radialGradient></defs><circle cx="260.5" cy="117" r="10" fill="url(#ys)" stroke="#2a2a2a" stroke-width="0.6"/>
<!-- grid cubes -->
<g fill="#7a9cc0"><rect x="292" y="108" width="4" height="4"/><rect x="297" y="107" width="4" height="4"/><rect x="302" y="108" width="4" height="4"/><rect x="290" y="113" width="4" height="4"/><rect x="296" y="113" width="4" height="4"/><rect x="302" y="113" width="4" height="4"/><rect x="307" y="114" width="4" height="4"/><rect x="294" y="119" width="4" height="4"/><rect x="300" y="119" width="4" height="4"/><rect x="306" y="120" width="4" height="4"/><rect x="302" y="124" width="4" height="4"/></g>
<!-- molecule -->
<path d="M327,124 L338,111" stroke="#9a7090" stroke-width="4"/><circle cx="327.5" cy="123" r="5.3" fill="#5a7fb0"/><circle cx="338" cy="110.5" r="5.5" fill="#c0403a"/>
<!-- pyramid -->
<path d="M356,127 L360,117 L370,117 L374,127 Z M356,127 L370,117 M374,127 L360,117 M365,106 V122 M362,109 L365,106 L368,109" fill="none" stroke="#a8d0e8" stroke-width="1.2"/>
<!-- blob -->
<circle cx="397" cy="117" r="9" fill="#7a9ccc" stroke="#9ab8e0" stroke-width="2" stroke-dasharray="2,1.5"/>
<!-- grass -->
<path d="M420,127 Q422,115 419,108 M424,127 Q425,115 426,106 M428,127 Q429,117 433,109 M432,127 Q433,118 439,112 M426,127 Q422,118 418,114 M435,127 Q437,120 440,117" fill="none" stroke="#7aa83a" stroke-width="2"/>
<!-- blue sphere -->
<defs><radialGradient id="bs" cx="0.4" cy="0.35" r="0.7"><stop offset="0" stop-color="#e8f0f8"/><stop offset="0.35" stop-color="#90acc8"/><stop offset="1" stop-color="#5a7898"/></radialGradient>
<radialGradient id="bs2" cx="0.4" cy="0.35" r="0.7"><stop offset="0" stop-color="#a8d0ff"/><stop offset="0.4" stop-color="#3a88d8"/><stop offset="1" stop-color="#1a58a8"/></radialGradient></defs>
<circle cx="469" cy="116.5" r="10" fill="url(#bs)" stroke="#333" stroke-width="0.5"/>
<use href="#tri" x="481" y="126"/>
<!-- 4 balls -->
<circle cx="495.8" cy="111.8" r="4.3" fill="#e04848"/><circle cx="506.2" cy="111.8" r="4.3" fill="#9ac048"/><circle cx="495.8" cy="122.2" r="4.3" fill="#2a68c8"/><circle cx="506.2" cy="122.2" r="4.3" fill="#f0b818"/>
<!-- purple -->
<rect x="522.5" y="106.5" width="21" height="21" fill="#6a44b8" stroke="#222" stroke-width="0.8"/>
<path d="M526.5,118 A7,7 0 0 1 540,116 Q540,120 537,122 Q535,120 534,123 Q530,125 526.5,118 Z" fill="#f0f0f0"/>
<circle cx="531" cy="116" r="1.8" fill="#6a44b8"/><circle cx="535" cy="112.5" r="1.2" fill="#6a44b8"/>
<use href="#tri" x="545" y="126"/>
<!-- sphere + rect -->
<rect x="557" y="106" width="19" height="19" fill="none" stroke="#e04040" stroke-width="1.3" stroke-dasharray="2.5,1.8"/>
<rect x="568" y="114" width="8" height="11" fill="#000"/>
<circle cx="561" cy="120.5" r="7" fill="url(#bs2)"/>
<!-- doc -->
<rect x="594" y="107.5" width="15" height="19" fill="#c8ccd4" stroke="#333" stroke-width="0.6"/>
<rect x="594" y="107.5" width="15" height="3" fill="#2a5aa8"/>
<g fill="#5a7aa8"><rect x="596" y="113" width="11" height="1"/><rect x="596" y="116" width="11" height="1"/><rect x="596" y="119" width="11" height="1"/><rect x="596" y="122" width="11" height="1"/></g>
<rect x="609" y="116.5" width="6" height="10" fill="#c8ccd4" stroke="#333" stroke-width="0.6"/>
<path d="M605,120.5 H613 M605,120.5 L608,118 M605,120.5 L608,123" stroke="#e04040" stroke-width="1.3"/>
<!-- help -->
<circle cx="637" cy="117" r="9.3" fill="none" stroke="#7a8290" stroke-width="2.2"/><circle cx="637" cy="117" r="10.6" fill="none" stroke="#2a2a2a" stroke-width="0.6"/>
<text x="632.7" y="122.5" font-size="13.5" font-weight="bold" fill="#6e7684" font-family="Liberation Sans">?</text>
</svg>

<div class="a" style="left:0;top:141px;width:33px;height:1px;background:#2a2a2a"></div>
<div class="a" style="left:33px;top:137px;width:6px;height:826px;background:#434343"></div><div class="a" style="left:37px;top:137px;width:1px;height:826px;background:#0e0e0e"></div>
<svg class="a" style="left:0;top:168px" width="8" height="18"><path d="M-2,4 L3,7 L-2,10 M-2,9 L3,12 L-2,15" fill="none" stroke="#9a9a9a" stroke-width="1.6"/></svg>
<div class="t" style="left:21px;top:169px;font-size:10px;color:#6a6ab0;letter-spacing:-1px">&gt;&gt;</div>
<div class="a" style="left:0;top:195px;width:16px;height:19px;border:1px solid #3a3a3a;background:#474747"></div>
<div class="a" style="left:17px;top:195px;width:16px;height:19px;border:1px solid #3a3a3a;background:#474747;overflow:hidden"><span class="t" style="left:1.5px;top:3px;font-size:13px;color:#f4f4f4">Fr</span></div>
<svg class="a" style="left:0;top:195px" width="16" height="19"><path d="M11,2.5 L15,10.5 L7,10.5 Z" fill="#f4f4f4"/></svg>
<div class="a" style="left:0;top:214px;width:33px;height:19px;background:#4a4a4a"></div>
<div class="a" style="left:0;top:233px;width:33px;height:19px;background:#8a8a8a"></div>
<div class="a" style="left:0;top:252px;width:33px;height:18px;background:#4a4a4a"></div>
<div class="a" style="left:0;top:270px;width:33px;height:18px;background:#505050"></div>
<div class="a" style="left:16px;top:214px;width:1px;height:74px;background:#3e3e3e"></div>
<div class="a" style="left:0;top:916px;width:33px;height:17px;background:#efefef"></div>
<svg class="a" style="left:18px;top:918px" width="12" height="13"><path d="M3,2 L8,6.5 L3,11" fill="none" stroke="#333" stroke-width="2"/></svg>
<div class="t" style="left:21px;top:938px;font-size:10px;color:#6a6ab0;letter-spacing:-1px">&gt;&gt;</div>

<!-- command panel -->
<div class="a" style="left:1550px;top:163px;width:193px;height:799px;background:#454545;border-left:1px solid #3a3a3a;border-bottom:1px solid #3a3a3a;border-radius:0 0 0 5px"></div>
<div class="a" style="left:1549.5px;top:137px;width:30px;height:26px;background:#393939;border-radius:4px 4px 0 0"></div>
<div class="a" style="left:1582px;top:137px;width:29px;height:27px;background:#454545;border-radius:4px 4px 0 0"></div>
<div class="a" style="left:1613px;top:137px;width:31px;height:26px;background:#393939;border-radius:4px 4px 0 0"></div>
<div class="a" style="left:1646px;top:137px;width:29px;height:26px;background:#393939;border-radius:4px 4px 0 0"></div>
<div class="a" style="left:1677.5px;top:137px;width:29.5px;height:26px;background:#393939;border-radius:4px 4px 0 0"></div>
<div class="a" style="left:1709px;top:137px;width:30px;height:26px;background:#393939;border-radius:4px 4px 0 0"></div>
<svg class="a" style="left:1540px;top:135px" width="203" height="40" viewBox="1540 135 203 40">
<path d="M1557,151 H1573 M1565,143 V159" stroke="#b8b8b8" stroke-width="1.7"/>
<rect x="1590" y="143.5" width="14" height="14" fill="none" stroke="#45c3c3" stroke-width="1"/>
<g fill="#3a3a3a" stroke="#45c3c3" stroke-width="1"><rect x="1588.5" y="142" width="3" height="3"/><rect x="1602.5" y="142" width="3" height="3"/><rect x="1588.5" y="156" width="3" height="3"/><rect x="1602.5" y="156" width="3" height="3"/></g>
<path d="M1592.5,156 Q1593,146 1602,145" fill="none" stroke="#c8c8c8" stroke-width="1.8"/>
<rect x="1622.5" y="143" width="12" height="4.5" fill="#b0b0b0"/>
<path d="M1628.5,148 V151 M1622.5,157 V151 H1634.5 V157" fill="none" stroke="#45c3c3" stroke-width="1"/>
<rect x="1621" y="156" width="3" height="3" fill="#45c3c3"/><rect x="1633" y="156" width="3" height="3" fill="#45c3c3"/>
<path d="M1658,145 A6.5,6.5 0 0 0 1658,157 M1660,144.5 A7,7 0 0 0 1660,157.5" fill="none" stroke="#45c3c3" stroke-width="0.8"/>
<circle cx="1664" cy="150.5" r="6.3" fill="#a8a8a8"/>
<rect x="1685" y="144" width="16" height="9.5" fill="#a8a8a8"/><rect x="1689" y="156" width="8" height="1.3" fill="#a8a8a8"/>
<path d="M1718,144 A4,4 0 0 0 1721,151 L1731,159" fill="none" stroke="#a8a8a8" stroke-width="2.6"/>
<circle cx="1731" cy="158.5" r="1.5" fill="#393939" stroke="#a8a8a8" stroke-width="1"/>
</svg>
<div class="fld" style="left:1555px;top:172px;width:165px;height:18px;background:#696969;padding-top:4px;padding-left:3px">Circle003</div>
<div class="a" style="left:1726px;top:171px;width:17px;height:19px;background:#c4307a;border-left:1px solid #111;border-top:1px solid #111"></div>
<div class="dd" style="left:1555px;top:201px;width:188px;height:19px;background:#686868;padding-left:2px;padding-top:4px">Modifier List</div>
<div class="a" style="left:1554.5px;top:225.5px;width:189px;height:127px;border:1.5px solid #f4f4f4;border-right:none;background:#444"></div>
<div class="a" style="left:1556px;top:227px;width:20px;height:16.5px;background:#3c3c3c"></div>
<div class="a" style="left:1576px;top:227px;width:167px;height:16.5px;background:#5b87c0"></div>
<div class="lbl" style="left:1597px;top:230px;color:#f4f4f4">Extrude</div>
<div class="a" style="left:1556px;top:243.5px;width:187px;height:1px;background:#5a5a5a"></div>
<div class="lbl" style="left:1577px;top:247px;color:#f0f0f0">Circle</div>
<div class="a" style="left:1556px;top:260px;width:187px;height:1px;background:#8a8a8a"></div>
<svg class="a" style="left:1540px;top:225px" width="203" height="200" viewBox="1540 225 203 200">
<path d="M1561,235 Q1567.5,229 1574,235 Q1567.5,241 1561,235 Z" fill="#e0e0e0"/><circle cx="1567.5" cy="235" r="2.3" fill="#3c3c3c"/><circle cx="1568.3" cy="234.3" r="0.8" fill="#e0e0e0"/>
<path d="M1560,377 L1566,371 M1564,366 L1572,373 L1569,374 L1566,371 L1563,370 Z" fill="#bdbdbd" stroke="#bdbdbd" stroke-width="1.3"/>
<rect x="1584.5" y="362" width="1.3" height="16" fill="#111"/>
<rect x="1590.8" y="359" width="22" height="21.8" rx="3" fill="#5b87c5"/>
<path d="M1598.5,363.5 H1605.5 M1599.5,363.5 V376 Q1602,378.5 1604.5,376 V363.5" fill="#45c3c3" stroke="#e0e0e0" stroke-width="1.5"/>
<rect x="1620.5" y="362" width="1.3" height="16" fill="#111"/>
<circle cx="1633.5" cy="367" r="3.3" fill="#3a3a3a" stroke="#2a2a2a" stroke-width="0.8"/><circle cx="1640" cy="374" r="4" fill="#3a3a3a" stroke="#2a2a2a" stroke-width="0.8"/><circle cx="1643" cy="370" r="3.2" fill="#3a3a3a" stroke="#2a2a2a" stroke-width="0.8"/>
<path d="M1657,364 H1669 M1661,364 V362.5 H1665 V364 M1658.5,365.5 H1667.5 L1667,377 H1659 Z" fill="#d0d0d0" stroke="#d0d0d0" stroke-width="1"/>
<path d="M1661,367 V375 M1663,367 V375 M1665,367 V375" stroke="#474747" stroke-width="0.9"/>
<rect x="1680.5" y="362" width="1.3" height="16" fill="#111"/>
<rect x="1690.5" y="363.5" width="13" height="14" fill="none" stroke="#d0d0d0" stroke-width="1.3"/>
<g fill="#d0d0d0"><rect x="1692.5" y="367" width="3.5" height="3.5"/><rect x="1692.5" y="372" width="3.5" height="3.5"/><rect x="1697.5" y="372" width="3.5" height="3.5"/></g>
<path d="M1697,370 L1705,362" stroke="#f0b020" stroke-width="2.2"/>
<path d="M1559,399.5 H1639 M1659,399.5 H1738" stroke="#5e5e5e" stroke-width="1"/>
<path d="M1642,398.5 H1655 M1642,400.5 H1655" stroke="#c8c8c8" stroke-width="0.8" stroke-dasharray="1,1"/>
</svg>
<!-- parameters rollout -->
<div class="a" style="left:1553.7px;top:407px;width:183px;height:310px;background:#525252;border-radius:4px;border:1px solid #404040"></div>
<div class="a" style="left:1739px;top:407px;width:4px;height:555px;background:#3d3d3d"></div>
<svg class="a" style="left:1553px;top:407px" width="184" height="20"><path d="M7,8 L13,8 L10,12 Z" fill="#c0c0c0"/>
<g fill="#8a8a8a"><rect x="170" y="6" width="1.2" height="1.2"/><rect x="172.5" y="6" width="1.2" height="1.2"/><rect x="175" y="6" width="1.2" height="1.2"/><rect x="170" y="8.5" width="1.2" height="1.2"/><rect x="172.5" y="8.5" width="1.2" height="1.2"/><rect x="175" y="8.5" width="1.2" height="1.2"/><rect x="170" y="11" width="1.2" height="1.2"/><rect x="172.5" y="11" width="1.2" height="1.2"/><rect x="175" y="11" width="1.2" height="1.2"/></g></svg>
<div class="lbl" style="left:1573px;top:410px;font-weight:bold;font-size:12px;color:#f4f4f4">Parameters</div>
<div class="lbl" style="left:1593px;top:438px">Amount:</div>
<div class="fld" style="left:1638.6px;top:436.7px;width:68.7px;height:14.5px;padding-top:2px">25.0</div>
<div class="lbl" style="left:1583px;top:458px">Segments:</div>
<div class="fld" style="left:1638.6px;top:456px;width:68.7px;height:14.5px;padding-top:2px">2</div>
<svg class="a" style="left:1695px;top:436px" width="12" height="36"><path d="M3,7 L6,3.5 L9,7 Z M3,9 L9,9 L6,12.5 Z M3,26 L6,22.5 L9,26 Z M3,28 L9,28 L6,31.5 Z" fill="#d8d8d8"/></svg>
<div class="grp" style="left:1567.3px;top:479.3px;width:154.2px;height:68px"></div>
<div class="lbl" style="left:1570px;top:474px;background:#525252;padding:0 2px">Capping</div>
<div class="cb" style="left:1614.8px;top:492px"></div>
<div class="lbl" style="left:1627.5px;top:491px">Cap Start</div>
<div class="a" style="left:1626px;top:489px;width:51px;height:16px;border:1px dotted #b0b0b0"></div>
<div class="cb" style="left:1614.8px;top:509.5px"></div>
<div class="lbl" style="left:1627.5px;top:509px">Cap End</div>
<div class="rd" style="left:1593.5px;top:528.5px"></div>
<div class="a" style="left:1596.5px;top:531.5px;width:6px;height:6px;border-radius:50%;background:#e8e8e8"></div>
<div class="lbl" style="left:1611.5px;top:529px">Morph</div>
<div class="rd" style="left:1659.5px;top:528.5px"></div>
<div class="lbl" style="left:1677px;top:529px">Grid</div>
<div class="grp" style="left:1567.3px;top:557.4px;width:154.2px;height:65px"></div>
<div class="lbl" style="left:1570px;top:552px;background:#525252;padding:0 2px">Output</div>
<div class="rd" style="left:1611.5px;top:567.5px"></div>
<div class="lbl" style="left:1629px;top:568px">Patch</div>
<div class="rd" style="left:1611.5px;top:585.5px"></div>
<div class="a" style="left:1614.5px;top:588.5px;width:6px;height:6px;border-radius:50%;background:#e8e8e8"></div>
<div class="lbl" style="left:1629px;top:586px">Mesh</div>
<div class="rd" style="left:1611.5px;top:604.5px"></div>
<div class="lbl" style="left:1629px;top:605px">NURBS</div>
<div class="cb" style="left:1572.5px;top:629px"></div>
<div class="lbl" style="left:1585.5px;top:628px">Generate Mapping Coords.</div>
<div class="cb" style="left:1572.5px;top:645px;background:#565656"></div>
<div class="lbl" style="left:1585.5px;top:644px;color:#8c8c8c">Real-World Map Size</div>
<div class="cb" style="left:1572.5px;top:661px"></div>
<div class="lbl" style="left:1585.5px;top:660px">Generate Material IDs</div>
<div class="cb" style="left:1588.5px;top:678px"></div>
<div class="lbl" style="left:1601px;top:677px">Use Shape IDs</div>
<div class="cb" style="left:1572.5px;top:694px"></div>
<div class="lbl" style="left:1585.5px;top:693px">Smooth</div>
<svg class="a" style="left:1540px;top:500px" width="100" height="210" viewBox="1540 500 100 210">
<path d="M1617,515 L1619.5,518 L1624,512" fill="none" stroke="#e8e8e8" stroke-width="1.6"/>
<path d="M1574.5,666 L1577,669 L1581.5,663" fill="none" stroke="#e8e8e8" stroke-width="1.6"/>
<path d="M1574.5,699 L1577,702 L1581.5,696" fill="none" stroke="#e8e8e8" stroke-width="1.6"/>
</svg>

<!-- time slider -->
<div class="a" style="left:40px;top:919px;width:14px;height:16px;background:#585858;border-radius:3px"></div>
<div class="a" style="left:56px;top:919px;width:123px;height:16px;background:#676767;border-radius:3px"></div>
<div class="a" style="left:181px;top:919px;width:14px;height:16px;background:#585858;border-radius:3px"></div>
<div class="t" style="left:44px;top:921px;font-size:12px;color:#c8c8c8">&lt;</div>
<div class="t" style="left:185px;top:921px;font-size:12px;color:#c8c8c8">&gt;</div>
<div class="t" style="left:99px;top:922px;font-size:11px;color:#d8d8d8">0 / 100</div>
<div class="a" style="left:39px;top:936px;width:1506px;height:1px;background:#151515"></div>
<div class="a" style="left:89px;top:937px;width:1406px;height:25px;background:#2b2b2b"></div>
<div class="a" style="left:92px;top:939px;width:7px;height:23px;background:#8c8220"></div>
<svg class="a" style="left:0;top:0" width="1743" height="1013" viewBox="0 0 1743 1013">
<path d="M95.5,937 V962 M109.5,938 V949 M123.5,938 V949 M137.5,938 V949 M150.5,938 V949 M164.5,937 V962 M178.5,938 V949 M192.5,938 V949 M206.5,938 V949 M220.5,938 V949 M234.5,937 V962 M248.5,938 V949 M262.5,938 V949 M276.5,938 V949 M290.5,938 V949 M304.5,937 V962 M318.5,938 V949 M332.5,938 V949 M346.5,938 V949 M360.5,938 V949 M374.5,937 V962 M387.5,938 V949 M401.5,938 V949 M415.5,938 V949 M429.5,938 V949 M443.5,937 V962 M457.5,938 V949 M471.5,938 V949 M485.5,938 V949 M499.5,938 V949 M513.5,937 V962 M527.5,938 V949 M541.5,938 V949 M555.5,938 V949 M569.5,938 V949 M583.5,937 V962 M597.5,938 V949 M610.5,938 V949 M624.5,938 V949 M638.5,938 V949 M652.5,937 V962 M666.5,938 V949 M680.5,938 V949 M694.5,938 V949 M708.5,938 V949 M722.5,937 V962 M736.5,938 V949 M750.5,938 V949 M764.5,938 V949 M778.5,938 V949 M792.5,937 V962 M806.5,938 V949 M820.5,938 V949 M834.5,938 V949 M847.5,938 V949 M861.5,937 V962 M875.5,938 V949 M889.5,938 V949 M903.5,938 V949 M917.5,938 V949 M931.5,937 V962 M945.5,938 V949 M959.5,938 V949 M973.5,938 V949 M987.5,938 V949 M1001.5,937 V962 M1015.5,938 V949 M1029.5,938 V949 M1043.5,938 V949 M1057.5,938 V949 M1071.5,937 V962 M1084.5,938 V949 M1098.5,938 V949 M1112.5,938 V949 M1126.5,938 V949 M1140.5,937 V962 M1154.5,938 V949 M1168.5,938 V949 M1182.5,938 V949 M1196.5,938 V949 M1210.5,937 V962 M1224.5,938 V949 M1238.5,938 V949 M1252.5,938 V949 M1266.5,938 V949 M1280.5,937 V962 M1294.5,938 V949 M1307.5,938 V949 M1321.5,938 V949 M1335.5,938 V949 M1349.5,937 V962 M1363.5,938 V949 M1377.5,938 V949 M1391.5,938 V949 M1405.5,938 V949 M1419.5,937 V962 M1433.5,938 V949 M1447.5,938 V949 M1461.5,938 V949 M1475.5,938 V949 M1489.5,937 V962" stroke="#8a8a8a" stroke-width="1"/>
<g font-family="Liberation Sans" font-size="11" fill="#d8d8d8"><text x="164.9" y="960" text-anchor="middle">5</text><text x="234.6" y="960" text-anchor="middle">10</text><text x="304.3" y="960" text-anchor="middle">15</text><text x="374.0" y="960" text-anchor="middle">20</text><text x="443.7" y="960" text-anchor="middle">25</text><text x="513.4" y="960" text-anchor="middle">30</text><text x="583.1" y="960" text-anchor="middle">35</text><text x="652.8" y="960" text-anchor="middle">40</text><text x="722.5" y="960" text-anchor="middle">45</text><text x="792.2" y="960" text-anchor="middle">50</text><text x="861.9" y="960" text-anchor="middle">55</text><text x="931.6" y="960" text-anchor="middle">60</text><text x="1001.3" y="960" text-anchor="middle">65</text><text x="1071.0" y="960" text-anchor="middle">70</text><text x="1140.7" y="960" text-anchor="middle">75</text><text x="1210.4" y="960" text-anchor="middle">80</text><text x="1280.1" y="960" text-anchor="middle">85</text><text x="1349.8" y="960" text-anchor="middle">90</text><text x="1419.5" y="960" text-anchor="middle">95</text><text x="1489.2" y="960" text-anchor="middle">100</text></g>
<text x="95.5" y="960" text-anchor="middle" font-family="Liberation Sans" font-size="11" fill="#e8e070">0</text>
<!-- curve icon -->
<g fill="#d0d0d0"><rect x="52" y="944" width="4" height="1.3"/><rect x="52" y="946.5" width="4" height="1.3"/><rect x="52" y="949" width="4" height="1.3"/><rect x="52" y="951.5" width="4" height="1.3"/><rect x="52" y="954" width="4" height="1.3"/></g>
<path d="M58.5,950 Q60,943 62,947 Q64,954 66,949" fill="none" stroke="#45c3c3" stroke-width="1.5"/>
</svg>
<!-- status bar -->
<div class="t" style="left:-3px;top:972px;font-size:11px;color:#ececec">ected</div>
<div class="t" style="left:-2px;top:997px;font-size:11px;color:#ececec">g to select and move objects</div>
<div class="t" style="left:955px;top:973px;font-size:11px;color:#e8e8e8">X:</div>
<div class="fld" style="left:968px;top:969px;width:68px;height:17px;padding-top:4px">261.88</div>
<div class="t" style="left:1038px;top:973px;font-size:11px;color:#e8e8e8">Y:</div>
<div class="fld" style="left:1051px;top:969px;width:68px;height:17px;padding-top:4px">-0.0</div>
<div class="t" style="left:1122px;top:973px;font-size:11px;color:#e8e8e8">Z:</div>
<div class="fld" style="left:1135px;top:969px;width:68px;height:17px;padding-top:4px">1.528</div>
<div class="t" style="left:1207.5px;top:973px;font-size:11px;color:#ececec">Grid = 10.0</div>
<div class="t" style="left:1209px;top:997px;font-size:11px;color:#e4e4e4">Add Time Tag</div>
<div class="a" style="left:1181px;top:992px;width:1px;height:19px;background:#111"></div>
<div class="a" style="left:1182px;top:992px;width:21px;height:21px;background:#5b87c5;border-radius:3px"></div>
<div class="a" style="left:1310px;top:967px;width:42px;height:42px;background:#575757;border-radius:3px"></div>
<div class="btn" style="left:1357px;top:967px;width:46px;height:20px;padding-top:4px;background:#5b5b5b">Auto Key</div>
<div class="btn" style="left:1357px;top:989px;width:46px;height:20px;padding-top:5px;background:#5b5b5b">Set Key</div>
<div class="dd" style="left:1408px;top:967px;width:114px;height:19.5px;background:#5e5e5e;padding-top:4px">Selected</div>
<div class="btn" style="left:1434px;top:990px;width:88px;height:19px;padding-top:5px;background:#5b5b5b">Key Filters...</div>
<div class="fld" style="left:1555px;top:991px;width:68px;height:15.6px;padding-top:3px;padding-left:3px">0</div>
<svg class="a" style="left:0;top:0" width="1743" height="1013" viewBox="0 0 1743 1013">
<!-- spinners -->
<path d="M1026,975 L1029,971.5 L1032,975 Z M1026,977 L1032,977 L1029,980.5 Z M1110,975 L1113,971.5 L1116,975 Z M1110,977 L1116,977 L1113,980.5 Z M1193,975 L1196,971.5 L1199,975 Z M1193,977 L1199,977 L1196,980.5 Z M1614,996 L1617,992.5 L1620,996 Z M1614,998 L1620,998 L1617,1001.5 Z" fill="#d8d8d8"/>
<!-- isolate -->
<path d="M877.5,973 V970 H880.5 M889,970 H892 V973 M892,981 V984 H889 M880.5,984 H877.5 V981" fill="none" stroke="#d0d0d0" stroke-width="1.2"/>
<rect x="881.5" y="974" width="7" height="6" fill="#45c3c3"/>
<!-- lock -->
<path d="M908,976 V973.5 A3.5,3.5 0 0 1 915,973.5 V976" fill="none" stroke="#d0d0d0" stroke-width="1.8"/>
<rect x="906" y="976" width="11" height="8" rx="1" fill="#d0d0d0"/><rect x="910.5" y="978.5" width="2" height="3" fill="#444"/>
<!-- abs -->
<rect x="932.5" y="970.5" width="13" height="13" fill="none" stroke="#d0d0d0" stroke-width="1.3"/>
<path d="M939,971 V983 M933,977 H945" stroke="#d0d0d0" stroke-width="1.3"/><circle cx="939" cy="977" r="3" fill="#444" stroke="#d0d0d0" stroke-width="1.4"/>
<!-- time tag icon -->
<path d="M1192.5,996.5 L1198,999.5 L1198,1006 L1192.5,1009 L1187,1006 L1187,999.5 Z M1187,999.5 L1192.5,1002.5 L1198,999.5 M1192.5,1002.5 V1009" fill="none" stroke="#e0e0e0" stroke-width="1.1"/>
<!-- big key -->
<path d="M1319,981 H1328 V972.5 H1335 V981 H1342 V988 H1335 V996 H1328 V988 H1319 Z" fill="#e4e4e4" stroke="#222" stroke-width="0.8"/>
<circle cx="1334" cy="997" r="3.5" fill="none" stroke="#45c3c3" stroke-width="1.8"/>
<path d="M1336.5,994.5 L1344,988 M1341,990.5 L1343,992.5 M1343,989 L1345,991" stroke="#45c3c3" stroke-width="1.8"/>
<!-- key mode icon -->
<circle cx="1412.5" cy="995.5" r="1.4" fill="#d0d0d0"/><circle cx="1424.5" cy="995.5" r="1.4" fill="#d0d0d0"/>
<rect x="1416.5" y="993" width="4" height="4" fill="none" stroke="#d0d0d0" stroke-width="1"/>
<path d="M1413.5,998 Q1413,1003 1411.5,1007 M1423.5,998 Q1424,1003 1426,1007" fill="none" stroke="#45c3c3" stroke-width="1.6"/>
<path d="M1426,1009 L1429,1006 L1429,1009 Z" fill="#d0d0d0"/>
<!-- playback -->
<g fill="#d0d0d0">
<rect x="1532" y="972.5" width="2" height="9.5"/><path d="M1535,977.2 L1540,972.5 V982 Z M1540.5,977.2 L1546,972.5 V982 Z"/>
<path d="M1558,977.2 L1563,972.5 V982 Z"/><rect x="1564.5" y="972.5" width="2" height="9.5"/><rect x="1568.5" y="972.5" width="2" height="9.5"/>
<path d="M1581,970.5 L1593,977.2 L1581,984 Z"/><path d="M1596,985 L1599,982 L1599,985 Z"/>
<rect x="1603.5" y="972.5" width="2" height="9.5"/><rect x="1607.5" y="972.5" width="2" height="9.5"/><path d="M1611,972.5 L1617,977.2 L1611,982 Z"/>
<path d="M1629.5,972.5 L1635,977.2 L1629.5,982 Z M1635.5,972.5 L1641,977.2 L1635.5,982 Z"/><rect x="1642" y="972.5" width="2" height="9.5"/>
<path d="M1533,999 L1537.5,994.5 V1003.5 Z M1539,994.5 L1543.5,999 L1539,1003.5 Z"/>
</g>
<g fill="#111"><rect x="1552" y="969" width="1.3" height="16"/><rect x="1624.5" y="969" width="1.3" height="16"/><rect x="1552" y="991" width="1.3" height="17"/><rect x="1625" y="991" width="1.3" height="17"/></g>
<!-- nav -->
<circle cx="1665" cy="975.5" r="4.5" fill="none" stroke="#d0d0d0" stroke-width="1.6"/><path d="M1661.5,979 L1656.5,984" stroke="#d0d0d0" stroke-width="2"/>
<circle cx="1685" cy="978" r="3.5" fill="none" stroke="#d0d0d0" stroke-width="1.4"/><path d="M1682.5,980.5 L1679,984" stroke="#d0d0d0" stroke-width="1.8"/>
<g fill="#45c3c3"><rect x="1684" y="970" width="4" height="4"/><rect x="1689" y="970" width="4" height="4"/><rect x="1689" y="975" width="4" height="4"/></g>
<path d="M1701.5,973 V970.5 H1704 M1713,970.5 H1715.5 V973 M1715.5,981 V983.5 H1713 M1704,983.5 H1701.5 V981" fill="none" stroke="#d0d0d0" stroke-width="1.1"/>
<path d="M1703.5,974.5 L1708.5,972 L1713.5,974.5 L1713.5,979.5 L1708.5,982 L1703.5,979.5 Z" fill="#45c3c3"/>
<path d="M1716,985 L1719,982 L1719,985 Z" fill="#d0d0d0"/>
<path d="M1725,978 L1729,975 L1733,978 L1729,981 Z" fill="#d0d0d0"/><path d="M1735,972 A3,2 0 0 1 1741,972 V980 A3,2 0 0 1 1735,980 Z" fill="#45c3c3"/>
<circle cx="1637" cy="996" r="5" fill="#d0d0d0"/><path d="M1637,993 V996.5 H1640" fill="none" stroke="#444" stroke-width="1.2"/>
<circle cx="1641" cy="1001.5" r="3.3" fill="none" stroke="#f0b020" stroke-width="2.2" stroke-dasharray="1.5,1"/>
<path d="M1659,992.5 L1670,998.5 L1659,1005.5 M1659.5,993 L1664.5,1004" fill="none" stroke="#d0d0d0" stroke-width="1.6"/>
<path d="M1673,1006 L1676,1003 L1676,1006 Z M1692,1006 L1695,1003 L1695,1006 Z M1713,1006 L1716,1003 L1716,1006 Z" fill="#d0d0d0"/>
<path d="M1683,1005 Q1681,999 1681.5,997 L1683,998 V992.5 L1685,992.5 V996 V991 L1687,991 V996 V991.5 L1689,991.5 V996.5 V993 L1691,993 V1002 Q1690,1006 1687,1006 Z" fill="#d0d0d0"/>
<ellipse cx="1709.5" cy="999" rx="8" ry="3.2" transform="rotate(-25 1709.5 999)" fill="none" stroke="#d0d0d0" stroke-width="1.1"/>
<circle cx="1709.5" cy="998" r="5" fill="#d0d0d0"/><path d="M1709.5,993 A5,5 0 0 1 1714.5,998 H1709.5 Z" fill="#45c3c3"/>
<rect x="1726" y="991.5" width="13" height="13.5" fill="none" stroke="#d0d0d0" stroke-width="1.6"/>
<rect x="1726" y="998.5" width="6" height="6.5" fill="#444" stroke="#d0d0d0" stroke-width="1.3"/>
<path d="M1731,999 L1737,993 M1733.5,993 H1737.5 V997" fill="none" stroke="#d0d0d0" stroke-width="1.3"/>
</svg>
<!-- right panel bottom area -->

</body></html>
